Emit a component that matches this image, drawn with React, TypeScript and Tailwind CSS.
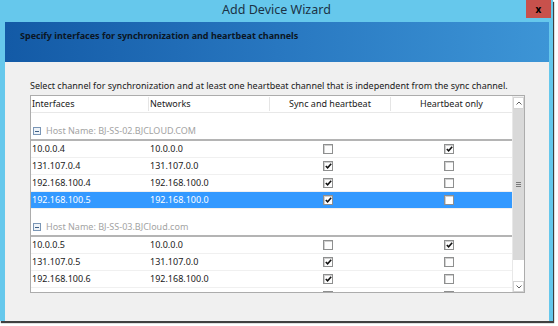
import React from "react";

type Row = { ip: string; net: string; sync: boolean; hb: boolean; selected?: boolean };

const groups: { host: string; rows: Row[] }[] = [
  {
    host: "Host Name: BJ-SS-02.BJCLOUD.COM",
    rows: [
      { ip: "10.0.0.4", net: "10.0.0.0", sync: false, hb: true },
      { ip: "131.107.0.4", net: "131.107.0.0", sync: true, hb: false },
      { ip: "192.168.100.4", net: "192.168.100.0", sync: true, hb: false },
      { ip: "192.168.100.5", net: "192.168.100.0", sync: true, hb: false, selected: true },
    ],
  },
  {
    host: "Host Name: BJ-SS-03.BJCloud.com",
    rows: [
      { ip: "10.0.0.5", net: "10.0.0.0", sync: false, hb: true },
      { ip: "131.107.0.5", net: "131.107.0.0", sync: true, hb: false },
      { ip: "192.168.100.6", net: "192.168.100.0", sync: true, hb: false },
      { ip: "192.168.100.7", net: "192.168.100.0", sync: false, hb: false },
    ],
  },
];

const CheckBox = ({ checked, selected }: { checked: boolean; selected?: boolean }) => (
  <span
    className={`flex h-[10px] w-[10px] items-center justify-center border border-[#8e8f8f] ${
      selected ? "bg-white" : "bg-[#fdfdfd]"
    } shadow-[inset_1px_1px_0_#d0d0d0]`}
  >
    {checked && (
      <svg width="7" height="6" viewBox="0 0 7 6">
        <path d="M0.8 3 L2.6 4.8 L6.2 0.8" fill="none" stroke="#111" strokeWidth="1.6" />
      </svg>
    )}
  </span>
);

const DataRow = ({ row }: { row: Row }) => (
  <div
    className={`grid h-[17px] grid-cols-[118px_121px_121px_121px] items-center border-b border-[#f0f0f0] ${
      row.selected ? "bg-[#3399ff] text-white" : "bg-white text-[#1a1a1a]"
    }`}
  >
    <span className="pl-[1px]">{row.ip}</span>
    <span className="pl-[1px]">{row.net}</span>
    <span className="flex justify-center pr-[5px]">
      <CheckBox checked={row.sync} selected={row.selected} />
    </span>
    <span className="flex justify-center pr-[5px]">
      <CheckBox checked={row.hb} selected={row.selected} />
    </span>
  </div>
);

export default function App() {
  return (
    <div
      className="h-[326px] w-[558px] overflow-hidden bg-white"
      style={{ fontFamily: '"Noto Sans", "Liberation Sans", sans-serif' }}
    >
      <div className="flex w-[553px] flex-col bg-[#66c8ec] pl-[5px] pr-[4px] shadow-[1px_2px_1px_rgba(0,0,0,0.75)]">
        {/* title bar */}
        <div className="relative -ml-[5px] -mr-[4px] flex h-[22px] items-center justify-center text-[12.5px] text-[#1b3346]">
          <span className="pb-[1px]">Add Device Wizard</span>
          <div className="absolute right-[2px] top-0 flex h-[18px] w-[25px] items-center justify-center bg-[#c8514c] text-[10px] font-bold text-black">
            x
          </div>
        </div>

        {/* banner */}
        <div className="h-[40px] bg-gradient-to-r from-[#135aa6] via-[#2877c0] to-[#3d95d6] pl-[15px] pt-[7px] text-[9px] font-bold text-[#0b1624]">
          Specify interfaces for synchronization and heartbeat channels
        </div>

        {/* body */}
        <div className="h-[259px] bg-[#f0f0f0] pl-[25px] pt-[18px] text-[9px] text-[#1a1a1a]">
          <div className="h-[12px] leading-[12px]">
            Select channel for synchronization and at least one heartbeat channel that is independent from the sync channel.
          </div>
          <div className="mt-[3px] flex h-[198px] w-[495px] border border-[#acacac] bg-white">
            <div className="flex-1 overflow-hidden">
              <div className="grid h-[17px] grid-cols-[118px_121px_121px_121px] items-center border-b border-[#e8e8e8]">
                <span className="border-r border-[#e5e5e5] pl-[1px]">Interfaces</span>
                <span className="border-r border-[#e5e5e5] pl-[1px]">Networks</span>
                <span className="border-r border-[#e5e5e5] text-center">Sync and heartbeat</span>
                <span className="text-center">Heartbeat only</span>
              </div>
              {groups.map((g) => (
                <div key={g.host}>
                  <div className="flex h-[28px] items-end border-b-2 border-[#b4b4b4] pb-[2px] pl-[2px] text-[#a3a3a3]">
                    <span className="mb-[2px] mr-[5px] flex h-[8px] w-[8px] items-center justify-center border border-[#7a96b6] bg-[#eef3f8]">
                      <span className="h-[1px] w-[4px] bg-[#3d5f86]" />
                    </span>
                    <span>{g.host}</span>
                  </div>
                  {g.rows.map((r) => (
                    <DataRow key={r.ip} row={r} />
                  ))}
                </div>
              ))}
            </div>

            {/* scrollbar */}
            <div className="flex w-[12px] flex-col border-l border-[#e8e8e8] bg-[#f0f0f0]">
              <div className="mt-[1px] flex h-[12px] items-center justify-center border border-[#d4d4d4] bg-white">
                <svg width="6" height="4" viewBox="0 0 6 4">
                  <path d="M0.5 3.5 L3 1 L5.5 3.5" fill="none" stroke="#606060" strokeWidth="1" />
                </svg>
              </div>
              <div className="flex h-[151px] items-center justify-center bg-[#d9d9d9]">
                <div className="flex flex-col gap-[1px]">
                  <span className="h-[1px] w-[5px] bg-[#7a7a7a]" />
                  <span className="h-[1px] w-[5px] bg-[#7a7a7a]" />
                  <span className="h-[1px] w-[5px] bg-[#7a7a7a]" />
                </div>
              </div>
              <div className="flex-1 bg-white" />
              <div className="flex h-[11px] items-center justify-center border border-[#d4d4d4] bg-white">
                <svg width="6" height="4" viewBox="0 0 6 4">
                  <path d="M0.5 0.5 L3 3 L5.5 0.5" fill="none" stroke="#606060" strokeWidth="1" />
                </svg>
              </div>
            </div>
          </div>
        </div>
      </div>
    </div>
  );
}
